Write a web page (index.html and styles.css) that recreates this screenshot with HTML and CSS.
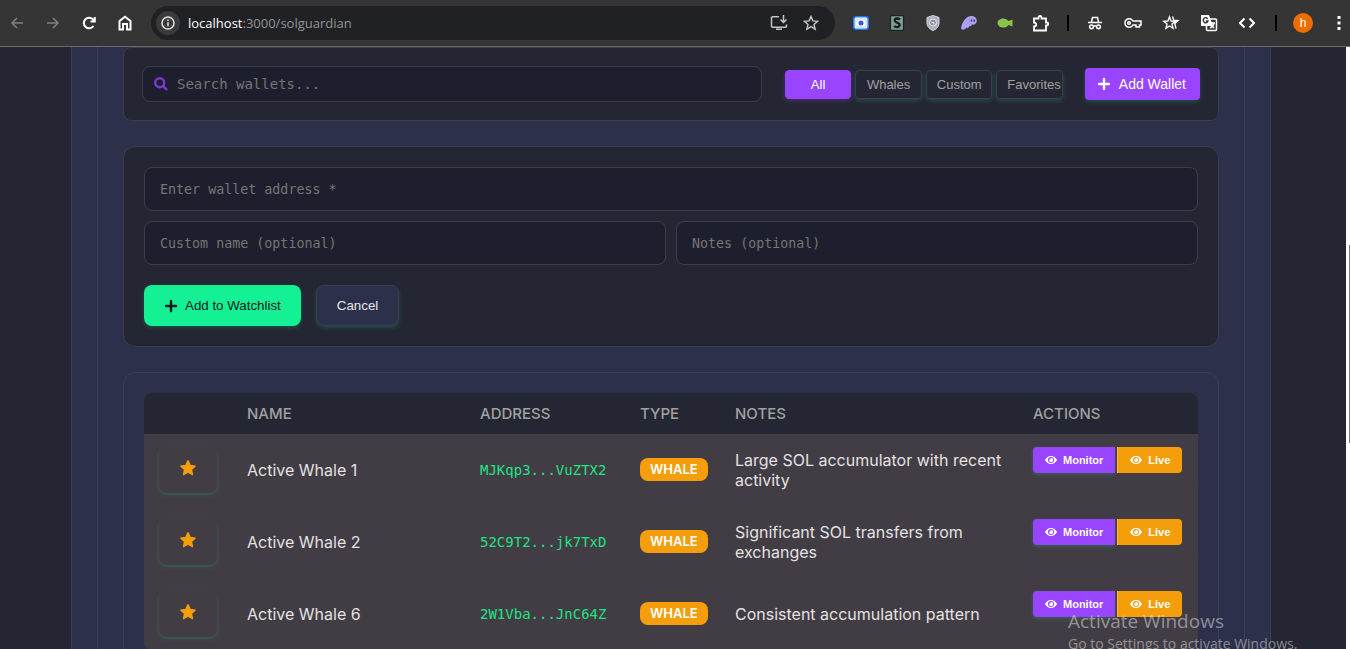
FILE: index.html
```html
<!DOCTYPE html>
<html lang="en">
<head>
<meta charset="utf-8">
<meta name="viewport" content="width=device-width, initial-scale=1">
<title>SolGuardian</title>
<link rel="stylesheet" href="styles.css">
</head>
<body>
<svg class="defs" aria-hidden="true">
  <symbol id="plus" viewBox="0 0 14 14"><path d="M7 2v10M2 7h10" fill="none" stroke="currentColor" stroke-width="2.4" stroke-linecap="round"/></symbol>
  <symbol id="eye" viewBox="0 0 576 512"><path fill="currentColor" d="M573 241C518 136 411 64 288 64S58 136 3 241a32 32 0 0 0 0 30c55 105 162 177 285 177s230-72 285-177a32 32 0 0 0 0-30zM288 400a144 144 0 1 1 0-288 144 144 0 0 1 0 288zm0-240a95 95 0 0 0-25 4 48 48 0 0 1-67 67 96 96 0 1 0 92-71z"/></symbol>
  <symbol id="star" viewBox="0 0 18 18"><path fill="currentColor" stroke="currentColor" stroke-width="1.2" stroke-linejoin="round" d="M9 1.600l2.200 4.700 5.100.7-3.700 3.600.9 5.200L9 13.300l-4.500 2.500.9-5.200L1.700 7l5.100-.7z"/></symbol>
</svg>
<div class="shell">
  <header class="bar">
    <nav class="nav">
      <button class="ico dim" aria-label="Back"><svg width="14" height="14" viewBox="0 0 14 14"><path d="M13 7H2M7 2L2 7l5 5"/></svg></button>
      <button class="ico dim" aria-label="Forward"><svg width="14" height="14" viewBox="0 0 14 14"><path d="M1 7h11M7 2l5 5-5 5"/></svg></button>
      <button class="ico" aria-label="Reload"><svg class="bold" width="14" height="14" viewBox="0 0 14 14"><path d="M11.500 10A5.300 5.300 0 1 1 11.300 3.700L12.500 5M12.800 1v4.500H8.500"/></svg></button>
      <button class="ico" aria-label="Home"><svg class="bold" width="14" height="16" viewBox="0 0 14 16"><path d="M1.500 6L7 1.700 12.500 6v8.500H9V9H5v5.500H1.500z"/></svg></button>
    </nav>
    <div class="omni">
      <button class="info" aria-label="Site information"><svg width="14" height="14" viewBox="0 0 14 14"><circle cx="7" cy="7" r="6"/><path d="M7 6.200v4M7 3.500v1.500"/></svg></button>
      <span class="url"><b>localhost</b>:3000/solguardian</span>
      <button class="ico soft" aria-label="Install"><svg width="18" height="16" viewBox="0 0 18 16"><path d="M9 1.700H2.500a1 1 0 0 0-1 1v8.600a1 1 0 0 0 1 1h13a1 1 0 0 0 1-1V9.500M6 14.200h6M13.500 0v7M10.500 4.500l3 3 3-3"/></svg></button>
      <button class="ico soft" aria-label="Bookmark"><svg width="16" height="16" viewBox="0 0 16 16"><path d="M8 1.500l1.900 4.400 4.700.4-3.600 3.100 1.100 4.700L8 11.600l-4.100 2.500L5 9.400 1.400 6.300l4.700-.4z"/></svg></button>
    </div>
    <div class="exts">
      <button class="ico" aria-label="Recorder"><svg width="16" height="14" viewBox="0 0 16 14"><rect x=".8" y=".8" width="14.400" height="12.400" rx="2.500" fill="#fff" stroke="#1f7bef"/><rect x="2.800" y="3" width="10.400" height="8" rx="1" fill="#fff" stroke="#7fb3f5" stroke-width=".6"/><circle cx="8" cy="7" r="2.500" fill="#3d55cf" stroke="none"/></svg></button>
      <button class="ico" aria-label="Stylus"><svg width="16" height="16" viewBox="0 0 16 16"><rect x="1.500" y=".7" width="13" height="14.600" rx="1" fill="#7f9c96" stroke="#1b2423" stroke-width="1.200"/><path d="M11 4.500C9.500 3 6 3 5.800 5.200c0 2.800 5 2.200 4.800 5C10.300 12.700 6.500 12.500 5 11" stroke="#15201f" stroke-width="2.400"/></svg></button>
      <button class="ico" aria-label="Shield"><svg width="14" height="16" viewBox="0 0 14 16"><path d="M7 .5l6 2v5.500c0 4-3 6.300-6 7.500-3-1.200-6-3.500-6-7.500V2.500z" fill="#aab1bd" stroke="#d4d8df" stroke-width="1"/><circle cx="7" cy="7.500" r="3.500" fill="#8b93a2" stroke="#e8ebf0" stroke-width="1"/><path d="M5.500 7.500h2.500v2" stroke="#e8ebf0" stroke-width="1"/></svg></button>
      <button class="ico" aria-label="Phantom"><svg width="18" height="16" viewBox="0 0 18 16"><path d="M1 13.500C2 7 6 1 11.500 1 15 1 17 3.500 16.800 6.300 16.500 9 14.500 10 12 9.600 11.300 11 10.600 11.500 9.500 11 8.500 13 7.500 14 6.500 12.500 5 15 2 15.500 1 13.500z" fill="#ab9ff2" stroke="none"/><path d="M11.500 4.500v2M14.300 4.500v2" stroke="#37305e" stroke-width="1.400"/></svg></button>
      <button class="ico" aria-label="Fish"><svg width="16" height="12" viewBox="0 0 16 12"><path d="M.5 6C1 .5 9 0 11.500 4L15.500 2.500v7l-4-1.500C9 12 1 11.500.5 6z" fill="#8bc34a" stroke="none"/></svg></button>
      <button class="ico" aria-label="Extensions"><svg width="18" height="17" viewBox="0 0 18 17"><path d="M2 3.500h4.500V2.500a1.500 1.500 0 0 1 3 0v1H14v4h.8a1.500 1.500 0 0 1 0 3H14v5H2v-4c3 0 3-4 0-4z" stroke-width="1.800"/></svg></button>
    </div>
    <i class="sep"></i>
    <div class="tools">
      <button class="ico" aria-label="Incognito"><svg width="14" height="14" viewBox="0 0 14 14"><path d="M0 6.500h14M3.500 6l1-4.500h5l1 4.500M5.500 10.300c1-.7 2-.7 3 0"/><circle cx="3.500" cy="10.800" r="1.900"/><circle cx="10.500" cy="10.800" r="1.900"/></svg></button>
      <button class="ico" aria-label="Passwords"><svg width="18" height="12" viewBox="0 0 18 12"><path d="M9 4A4.300 4.300 0 1 0 9 8h3v2h3.500V8H17V4z"/><circle cx="5" cy="6" r="1.300"/></svg></button>
      <button class="ico" aria-label="Bookmarks"><svg width="18" height="16" viewBox="0 0 18 16"><path d="M7.500 2l1.600 4 4.100.3-3.200 2.700 1 4.200-3.500-2.200L4 13.200 5 9 1.800 6.300 5.900 6zM10.500 1.500l1.300 3.700 4.300.4-3.300 3 1.200 5" stroke-width="1.400"/></svg></button>
      <button class="ico" aria-label="Translate"><svg width="18" height="18" viewBox="0 0 18 18"><rect x="6.500" y="5" width="10" height="11.500" rx="1"/><path d="M9 9h6M12 8v1M14 9c-.5 2.500-2 4-4 5M10.500 10.500l3.500 3.500"/><path d="M1 1h8l4 11H1z" fill="#fff" stroke="none"/><path d="M7.800 5A2.500 2.500 0 1 0 8 7H5.800" stroke="#353535" stroke-width="1.300"/></svg></button>
      <button class="ico" aria-label="Developer tools"><svg class="bold" width="16" height="12" viewBox="0 0 16 12"><path d="M5.500 1.500L1 6l4.500 4.500M10.500 1.500L15 6l-4.500 4.500"/></svg></button>
    </div>
    <i class="sep"></i>
    <button class="avatar" aria-label="Profile">h</button>
    <button class="dots" aria-label="Menu"><svg width="4" height="14" viewBox="0 0 4 14"><path d="M.5 0h3v3h-3zM.5 5.500h3v3h-3zM.5 11h3v3h-3z" fill="#fff" stroke="none"/></svg></button>
  </header>
  <div class="view">
    <main class="page">
      <div class="outer"><div class="inner">
        <section class="card tools-card">
          <label class="search">
            <svg width="14" height="14" viewBox="0 0 14 14" aria-hidden="true"><circle cx="5.700" cy="5.700" r="4.500"/><path d="M9.200 9.200l3.800 3.800"/></svg>
            <input type="text" placeholder="Search wallets..." aria-label="Search wallets">
          </label>
          <div class="filters">
            <button class="filter on">All</button><button class="filter">Whales</button><button class="filter">Custom</button><button class="filter">Favorites</button>
          </div>
          <button class="btn add"><svg width="14" height="14"><use href="#plus"/></svg>Add Wallet</button>
        </section>
        <form class="card form">
          <input class="field wide" type="text" placeholder="Enter wallet address *" aria-label="Wallet address">
          <input class="field" type="text" placeholder="Custom name (optional)" aria-label="Custom name">
          <input class="field" type="text" placeholder="Notes (optional)" aria-label="Notes">
          <div class="acts">
            <button class="btn save" type="button"><svg width="14" height="14"><use href="#plus"/></svg>Add to Watchlist</button>
            <button class="btn cancel" type="button">Cancel</button>
          </div>
        </form>
        <section class="card list">
          <table>
            <colgroup><col class="c-star"><col class="c-name"><col class="c-addr"><col class="c-type"><col><col class="c-act"></colgroup>
            <thead><tr><th></th><th>Name</th><th>Address</th><th>Type</th><th>Notes</th><th>Actions</th></tr></thead>
            <tbody>
              <tr><td><button class="fav" aria-label="Favorite"><svg width="18" height="18"><use href="#star"/></svg></button></td><td>Active Whale 1</td><td class="addr">MJKqp3...VuZTX2</td><td><span class="badge">WHALE</span></td><td>Large SOL accumulator with recent activity</td><td class="act"><div class="pair"><button class="mini mon"><svg width="12" height="12"><use href="#eye"/></svg>Monitor</button><button class="mini live"><svg width="12" height="12"><use href="#eye"/></svg>Live</button></div></td></tr>
              <tr><td><button class="fav" aria-label="Favorite"><svg width="18" height="18"><use href="#star"/></svg></button></td><td>Active Whale 2</td><td class="addr">52C9T2...jk7TxD</td><td><span class="badge">WHALE</span></td><td>Significant SOL transfers from exchanges</td><td class="act"><div class="pair"><button class="mini mon"><svg width="12" height="12"><use href="#eye"/></svg>Monitor</button><button class="mini live"><svg width="12" height="12"><use href="#eye"/></svg>Live</button></div></td></tr>
              <tr><td><button class="fav" aria-label="Favorite"><svg width="18" height="18"><use href="#star"/></svg></button></td><td>Active Whale 6</td><td class="addr">2W1Vba...JnC64Z</td><td><span class="badge">WHALE</span></td><td>Consistent accumulation pattern</td><td class="act"><div class="pair"><button class="mini mon"><svg width="12" height="12"><use href="#eye"/></svg>Monitor</button><button class="mini live"><svg width="12" height="12"><use href="#eye"/></svg>Live</button></div></td></tr>
            </tbody>
          </table>
        </section>
      </div></div>
    </main>
    <div class="track"><i class="thumb"></i></div>
  </div>
  <aside class="mark"><strong>Activate Windows</strong><span>Go to Settings to activate Windows.</span></aside>
</div>
</body>
</html>
```
FILE: styles.css
```css
* { box-sizing: border-box; }
body { margin: 0; background: #242633; color: #e2e2e2; font: 16px/20px Inter, sans-serif; }
button { border: 0; padding: 0; background: none; color: inherit; font-family: "Liberation Sans", Arial, sans-serif; white-space: nowrap; cursor: pointer; }
.defs { display: none; }
.shell { position: relative; display: flex; flex-direction: column; height: 100vh; overflow: hidden; }

/* browser bar */
.bar { flex: none; display: flex; align-items: center; height: 47px; padding: 0 5px; background: #353535; border-bottom: 1px solid #6a6a6a; }
.bar svg { fill: none; stroke: currentColor; stroke-width: 1.5; }
.bar svg.bold { stroke-width: 2; }
.nav, .exts { display: flex; gap: 12px; }
.tools { display: flex; gap: 14px; margin-right: 2px; }
.ico { display: flex; align-items: center; justify-content: center; width: 24px; height: 24px; color: #fff; }
.dim { color: #808080; }
.soft { color: #c4c4c4; }
.omni { flex: 1; display: flex; align-items: center; gap: 8px; height: 34px; margin: 0 14px; padding: 0 12px 0 5px; border-radius: 17px; background: #202124; }
.info { display: flex; align-items: center; justify-content: center; width: 24px; height: 24px; border-radius: 50%; background: #3a3a3a; }
.url { flex: 1; color: #949494; font: 13px/20px "Open Sans", "Noto Sans", sans-serif; }
.url b { color: #fff; font-weight: 400; }
.sep { width: 2px; height: 16px; margin: 0 14px; background: #000; }
.avatar { width: 20px; height: 20px; margin: 0 20px 0 2px; border-radius: 50%; background: #ef6c00; color: #fff; font-size: 12px; }
.dots { display: flex; justify-content: center; width: 12px; }

/* page frame */
.view { flex: 1; display: flex; min-height: 0; }
.page { flex: 1; padding-right: 4px; overflow: hidden; }
.outer, .inner { padding: 0 25px; border: solid #3c3d4f; border-width: 0 1px; background: #2d304a; }
.outer { max-width: 1200px; margin: 0 auto; }
.inner { display: flex; flex-direction: column; gap: 25px; padding-bottom: 25px; }
.track { width: 4px; padding-top: 198px; background: #fff; }
.thumb { display: block; width: 1px; height: 198px; margin-left: auto; background: #777; }
.card { border: 1px solid #3c3d4f; border-radius: 12px; background: #242633; }

/* search and filters */
.tools-card { display: flex; align-items: center; padding: 18px; border-radius: 8px; }
.search { flex: 1; display: flex; align-items: center; gap: 9px; height: 36px; padding: 0 11px; border: 1px solid #3c3d4f; border-radius: 8px; background: #1e1f2e; }
.search svg { fill: none; stroke: #7a39cc; stroke-width: 2.4; }
.search input { flex: 1; min-width: 0; padding: 0; border: 0; outline: 0; background: none; color: #e2e2e2; font: 14px/20px "DejaVu Sans Mono", monospace; }
.filters { display: grid; grid-template-columns: repeat(4, 1fr); gap: 4px; width: 278px; margin: 0 22px 0 23px; }
.filter { min-width: 0; height: 29px; padding: 0 10px; border: 1px solid #3c3d4f; border-radius: 4px; color: #a0a0a0; font-size: 13px; box-shadow: 0 2px 4px rgba(20, 241, 149, .2); }
.filter.on { border-color: #9945ff; background: #9945ff; color: #fff; box-shadow: 0 2px 5px rgba(153, 69, 255, .3); }
.btn { display: flex; align-items: center; justify-content: center; gap: 7px; border-radius: 8px; box-shadow: 0 2px 4px rgba(20, 241, 149, .2); }
.add { height: 32px; padding: 0 14px 0 12px; gap: 8px; border-radius: 4px; background: #9945ff; color: #fff; font-size: 14px; }

/* wallet form */
.form { display: grid; grid-template-columns: 1fr 1fr; gap: 10px; padding: 20px; }
.field { min-width: 0; height: 44px; padding: 0 15px; border: 1px solid #3c3d4f; border-radius: 8px; outline: 0; background: #1e1f2e; color: #e2e2e2; font-family: "DejaVu Sans Mono", monospace; }
::placeholder { color: #757575; opacity: 1; }
.wide, .acts { grid-column: 1 / -1; }
.acts { display: flex; gap: 15px; padding-top: 10px; }
.save { height: 41px; padding: 0 20px; background: #14f195; color: #101820; }
.cancel { height: 41px; padding: 0 20px; border: 1px solid #3c3d4f; background: #2d304a; color: #e8e8e8; }

/* wallet table */
.list { padding: 20px; background: #2d304a; }
table { width: 100%; table-layout: fixed; border-collapse: separate; border-spacing: 0; border-radius: 8px; overflow: hidden; background: #423c44; }
.c-star { width: 88px; }
.c-name { width: 233px; }
.c-addr { width: 160px; }
.c-type { width: 95px; }
.c-act { width: 180px; }
th { height: 41px; padding: 0 15px; background: #242633; color: #a0a0a0; font-size: 15px; font-weight: 500; text-align: left; text-transform: uppercase; }
td { padding: 12px 15px; border-bottom: 1px solid #3c3c50; }
.addr { color: #1de584; font: 14px/20px "DejaVu Sans Mono", monospace; white-space: nowrap; }
.fav { display: flex; align-items: center; justify-content: center; width: 58px; height: 47px; padding-bottom: 4px; border-radius: 8px; color: #f59e0b; box-shadow: 0 2px 4px rgba(20, 241, 149, .2); }
.badge { display: inline-block; padding: 2px 10px; border-radius: 8px; background: #f59e0b; color: #fff; font-size: 13px; font-weight: 600; line-height: 19px; }
.act { padding: 0; border: 0; vertical-align: top; }
.pair { display: flex; gap: 2px; padding: 13px 15px 12px; border-bottom: 1px solid #3c3c50; }
.mini { display: flex; align-items: center; gap: 6px; height: 26px; padding: 0 12px; color: #fff; font-size: 11px; font-weight: 700; }
.mon { border-radius: 4px 0 0 4px; background: #9945ff; box-shadow: 0 2px 4px rgba(20, 241, 149, .2); }
.live { border-left: 1px solid #ffb83d; border-radius: 0 4px 4px 0; background: #f59e0b; }

.mark { position: absolute; right: 46px; bottom: -5px; display: flex; flex-direction: column; width: 236px; color: rgba(255, 255, 255, .45); font: 14px/20px "Open Sans", sans-serif; white-space: nowrap; pointer-events: none; }
.mark strong { font-size: 19px; font-weight: 400; line-height: 26px; }
```
